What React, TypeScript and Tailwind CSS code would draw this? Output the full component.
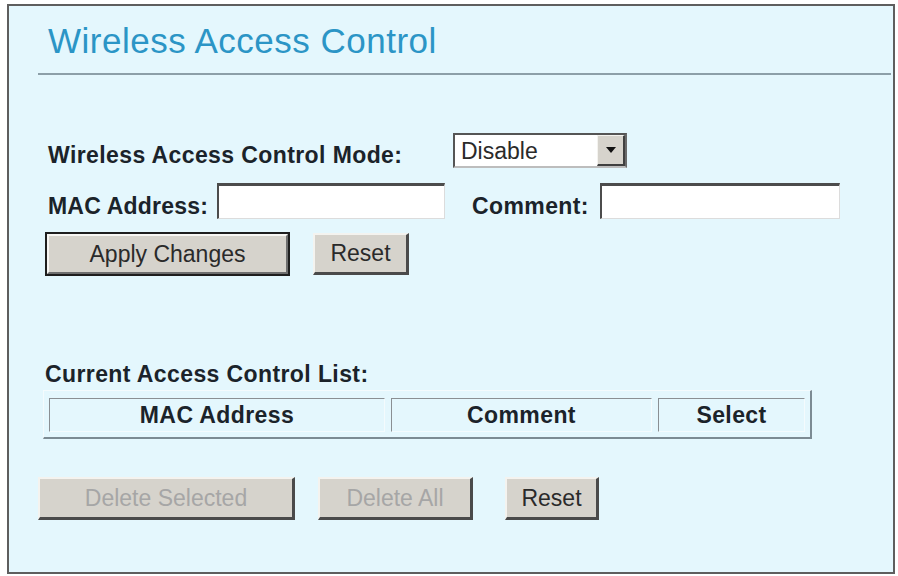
import React from 'react';

const font = { fontFamily: '"Liberation Sans", Arial, Helvetica, sans-serif' };

// classic 3D raised button
const Btn: React.FC<{ label: string; className?: string; disabled?: boolean; primary?: boolean }> = ({
    label,
    className = '',
    disabled,
    primary,
}) => {
    if (primary) {
        return (
            <div className={`border-2 border-[#1e1e1e] ${className}`}>
                <div className="w-full h-full bg-[#d6d3cc] border-t-2 border-l-2 border-t-[#f7f6f3] border-l-[#f7f6f3] border-b-2 border-r-2 border-b-[#6e6e6e] border-r-[#6e6e6e] flex items-center justify-center text-[23px] text-[#2a2a2a]">
                    {label}
                </div>
            </div>
        );
    }
    return (
        <div
            className={`bg-[#d6d3cc] border-t-2 border-l-2 border-t-[#f4f3ef] border-l-[#f4f3ef] border-b-[3px] border-r-[3px] border-b-[#4a4a4a] border-r-[#4a4a4a] flex items-center justify-center text-[23px] ${
                disabled ? 'text-[#a6a6a6]' : 'text-[#2a2a2a]'
            } ${className}`}
        >
            {label}
        </div>
    );
};

const TextBox: React.FC<{ className?: string }> = ({ className = '' }) => (
    <div
        className={`bg-white border-t-[3px] border-l-2 border-t-[#4c4c4c] border-l-[#4c4c4c] border-b border-r border-b-[#dcdcdc] border-r-[#dcdcdc] ${className}`}
    />
);

const HeadCell: React.FC<{ label: string; className?: string }> = ({ label, className = '' }) => (
    <div
        className={`h-[34px] border-t border-l border-t-[#8a8f93] border-l-[#8a8f93] border-b border-r border-b-[#f4fbfd] border-r-[#f4fbfd] flex items-center justify-center font-bold text-[23px] tracking-[0.4px] text-[#1b232a] ${className}`}
    >
        {label}
    </div>
);

export default function App() {
    return (
        <div className="w-[898px] h-[576px] bg-white pt-[4px] pl-[7px]" style={font}>
            <div className="w-[888px] h-[570px] bg-[#e4f7fd] border-2 border-[#5e5e5e]">
                {/* title */}
                <div className="mt-[15px] pl-[39px] text-[35px] leading-[40px] tracking-[0.5px] text-[#2b95c6]">
                    Wireless Access Control
                </div>
                <div className="mt-[12px] ml-[29px] mr-[2px] h-[2px] bg-[#8c9fa8]" />

                {/* mode */}
                <div className="mt-[58px] pl-[39px] flex items-start h-[35px]">
                    <div className="w-[405px] mt-[9px] font-bold text-[23px] leading-[26px] tracking-[0.4px] text-[#1b232a]">
                        Wireless Access Control Mode:
                    </div>
                    <div className="w-[174px] h-[35px] bg-white border-2 border-t-[#555] border-l-[#555] border-b-[#bdbdbd] border-r-[#6a6a6a] flex">
                        <div className="flex-1 pl-[6px] pt-[1px] text-[23px] leading-[31px] text-[#2a2a2a]">Disable</div>
                        <div className="w-[28px] bg-[#d6d3cc] border-t border-l border-t-[#f4f3ef] border-l-[#f4f3ef] border-b-2 border-r-2 border-b-[#404040] border-r-[#404040] flex items-center justify-center">
                            <svg width="10" height="6" viewBox="0 0 10 6">
                                <path d="M0 0h10L5 6z" fill="#111" />
                            </svg>
                        </div>
                    </div>
                </div>

                {/* mac / comment */}
                <div className="mt-[15px] pl-[39px] flex items-start h-[36px]">
                    <div className="w-[169px] mt-[10px] font-bold text-[23px] leading-[26px] tracking-[0.2px] text-[#1b232a]">
                        MAC Address:
                    </div>
                    <TextBox className="w-[228px] h-[36px]" />
                    <div className="w-[128px] ml-[27px] mt-[10px] font-bold text-[23px] leading-[26px] tracking-[0.4px] text-[#1b232a]">
                        Comment:
                    </div>
                    <TextBox className="w-[240px] h-[36px]" />
                </div>

                <div className="mt-[13px] pl-[36px] flex items-center">
                    <Btn label="Apply Changes" primary className="w-[245px] h-[44px]" />
                    <Btn label="Reset" className="w-[96px] h-[42px] ml-[23px]" />
                </div>

                {/* list */}
                <div className="mt-[85px] pl-[36px] font-bold text-[23px] leading-[26px] tracking-[0.4px] text-[#1b232a]">
                    Current Access Control List:
                </div>
                <div className="mt-[3px] ml-[34px] w-[769px] h-[49px] border-t border-l border-t-[#f4fbfd] border-l-[#f4fbfd] border-b-2 border-r-2 border-b-[#7c8b93] border-r-[#7c8b93] pt-[7px] pl-[5px] flex gap-[6px]">
                    <HeadCell label="MAC Address" className="w-[336px]" />
                    <HeadCell label="Comment" className="w-[261px]" />
                    <HeadCell label="Select" className="w-[147px]" />
                </div>

                <div className="mt-[38px] pl-[29px] flex items-center">
                    <Btn label="Delete Selected" disabled className="w-[257px] h-[43px]" />
                    <Btn label="Delete All" disabled className="w-[155px] h-[43px] ml-[23px]" />
                    <Btn label="Reset" className="w-[94px] h-[43px] ml-[32px]" />
                </div>
            </div>
        </div>
    );
}
